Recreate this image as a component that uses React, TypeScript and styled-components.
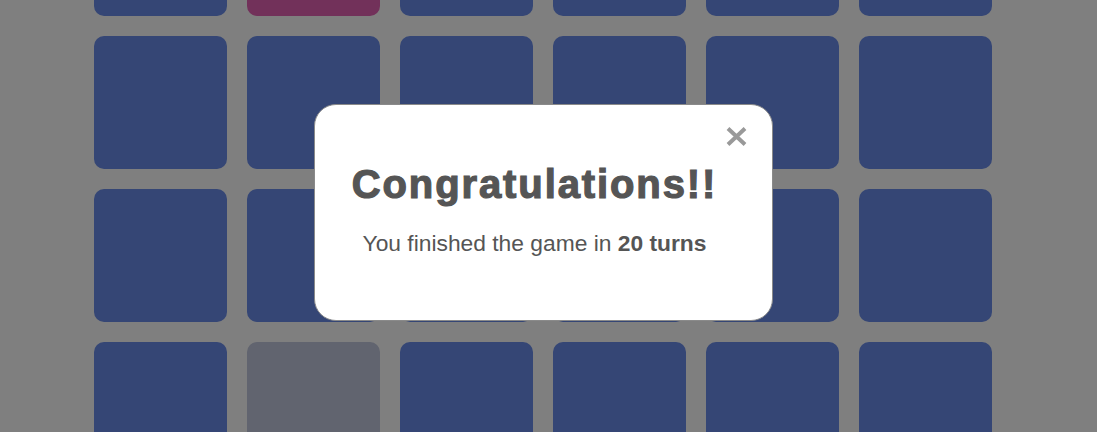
import React from "react";
import styled, { createGlobalStyle } from "styled-components";

type TileKind = "blue" | "pink" | "gray";

const tileColors: Record<TileKind, string> = {
  blue: "#6a8cea",
  pink: "#e462b4",
  gray: "#c2c8de",
};

const rows: TileKind[][] = [
  ["blue", "pink", "blue", "blue", "blue", "blue"],
  ["blue", "blue", "blue", "blue", "blue", "blue"],
  ["blue", "blue", "blue", "blue", "blue", "blue"],
  ["blue", "gray", "blue", "blue", "blue", "blue"],
];

const GlobalStyle = createGlobalStyle`
  html, body {
    margin: 0;
    padding: 0;
    height: 100%;
    background: #ffffff;
    overflow: hidden;
    font-family: "Liberation Sans", Arial, sans-serif;
  }
`;

export default function App() {
  return (
    <>
      <GlobalStyle />
      <Viewport>
        <Board>
          {rows.flat().map((kind, i) => (
            <Tile key={i} $kind={kind} />
          ))}
        </Board>
      </Viewport>
      <Overlay>
        <Modal>
          <CloseButton aria-label="close">
            <svg width="23" height="21" viewBox="0 0 23 21">
              <path
                d="M3 2.5 L20 18.5 M20 2.5 L3 18.5"
                stroke="#999999"
                strokeWidth="4"
                fill="none"
              />
            </svg>
          </CloseButton>
          <Title>Congratulations!!</Title>
          <Message>
            You finished the game in <strong>20 turns</strong>
          </Message>
        </Modal>
      </Overlay>
    </>
  );
}

const Viewport = styled.div`
  height: 432px;
  overflow: hidden;
`;

const Board = styled.div`
  display: grid;
  grid-template-columns: repeat(6, 133px);
  grid-auto-rows: 133px;
  gap: 20px;
  padding-left: 94px;
  margin-top: -117px;
`;

const Tile = styled.div<{ $kind: TileKind }>`
  background: ${(p) => tileColors[p.$kind]};
  border-radius: 10px;
`;

const Overlay = styled.div`
  position: fixed;
  inset: 0;
  background: rgba(0, 0, 0, 0.5);
  display: flex;
  justify-content: center;
  align-items: flex-start;
  padding: 104px 11px 0 0;
`;

const Modal = styled.div`
  position: relative;
  box-sizing: border-box;
  width: 459px;
  height: 217px;
  background: #ffffff;
  border: 1px solid #8a8a8a;
  border-radius: 22px;
  padding: 55px 37px 0 20px;
  text-align: center;
  color: #555555;
`;

const CloseButton = styled.button`
  position: absolute;
  top: 21px;
  right: 24px;
  padding: 0;
  border: none;
  background: none;
  display: flex;
  cursor: pointer;
`;

const Title = styled.h1`
  margin: 0;
  font-size: 40px;
  line-height: 48px;
  font-weight: 700;
  letter-spacing: 1.9px;
  -webkit-text-stroke: 1.2px #555555;
  white-space: nowrap;
`;

const Message = styled.p`
  margin: 22px 0 0;
  font-size: 22.8px;
  line-height: 27px;

  strong {
    font-weight: 700;
  }
`;
